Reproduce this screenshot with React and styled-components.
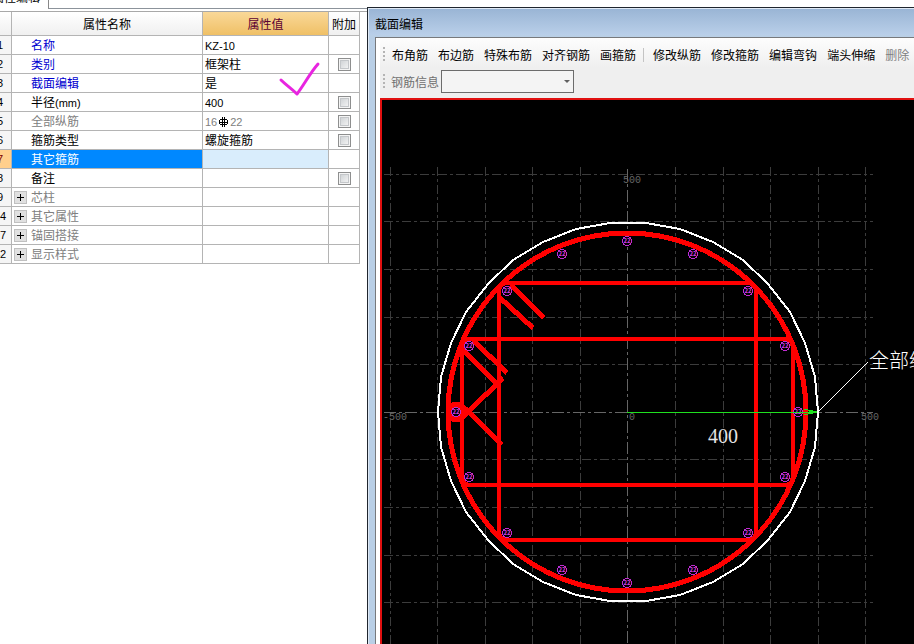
import React from 'react'
import styled, { createGlobalStyle, css } from 'styled-components'

const properties = [
    { no: '1', name: '名称', tone: 'key', value: <Latin>KZ-10</Latin> },
    { no: '2', name: '类别', tone: 'key', value: '框架柱', extra: true },
    { no: '3', name: '截面编辑', tone: 'key', value: '是' },
    { no: '4', name: <>半径<Latin>(mm)</Latin></>, label: '半径', value: <Latin>400</Latin>, extra: true },
    { no: '5', name: '全部纵筋', tone: 'muted', value: <Latin>16<SteelGrade />22</Latin>, extra: true },
    { no: '6', name: '箍筋类型', value: '螺旋箍筋', extra: true },
    { no: '7', name: '其它箍筋', selected: true },
    { no: '8', name: '备注', extra: true },
    { no: '9', name: '芯柱', tone: 'muted', group: true },
    { no: '14', name: '其它属性', tone: 'muted', group: true },
    { no: '27', name: '锚固搭接', tone: 'muted', group: true },
    { no: '42', name: '显示样式', tone: 'muted', group: true },
]

const layoutTools = ['布角筋', '布边筋', '特殊布筋', '对齐钢筋', '画箍筋']
const editTools = ['修改纵筋', '修改箍筋', '编辑弯钩', '端头伸缩']

const gridX = [-237, -190, -142, -95, -47, 48, 96, 143, 191, 238]
const gridY = [-238, -191, -143, -95, -48, 47, 95, 143, 190, 238]

const bars = [
    [0, -171], [-65, -158], [66, -158], [-120, -121], [121, -121],
    [-158, -66], [158, -66], [-171, 0], [171, 0], [-158, 65], [158, 65],
    [-120, 121], [121, 121], [-65, 158], [66, 158], [0, 171],
]

// the column edge is drawn as a 34 sided polygon
const outline = Array.from({ length: 34 }, (_, i) => {
    const a = (i * 2 * Math.PI) / 34
    return `${Math.round(190 * Math.cos(a)) + 1},${Math.round(190 * Math.sin(a))}`
}).join(' ')

function Latin({ children }) {
    return <LatinText>{children}</LatinText>
}

function SteelGrade() {
    return (
        <GradeIcon width="13" height="10" viewBox="0 0 13 10" aria-hidden="true">
            <rect x="2.5" y="2.5" width="8" height="5" rx="2" />
            <path d="M5.5 0V10M7.5 0V10M2 5.5H11" />
        </GradeIcon>
    )
}

function PropertyRow({ row }) {
    return (
        <tr>
            <NumberCell scope="row" $selected={row.selected}>{row.no}</NumberCell>
            <NameCell $tone={row.tone} $selected={row.selected}>
                <NameInner>
                    <ToggleSlot>
                        {row.group && <Toggle type="button" aria-label={`展开${row.name}`} />}
                    </ToggleSlot>
                    <span>{row.name}</span>
                </NameInner>
            </NameCell>
            <ValueCell $tone={row.tone} $selected={row.selected}>{row.value}</ValueCell>
            <ExtraCell>
                {row.extra && <Check type="checkbox" aria-label={`附加 ${row.label || row.name}`} />}
            </ExtraCell>
        </tr>
    )
}

function SectionDrawing() {
    return (
        <Drawing role="img" aria-label="圆形柱截面">
            <g transform="translate(245 312)" shapeRendering="crispEdges" fill="none">
                <g stroke="#3c3c3c" strokeDasharray="9 3 3 3">
                    {gridX.map(x => <path key={x} d={`M${x + 0.5} -245V245`} />)}
                    {gridY.map(y => <path key={y} d={`M-243 ${y + 0.5}H246`} />)}
                </g>
                <path d="M0.5 -243V245M-243 0.5H246" stroke="#666" strokeDasharray="12 3 3 3" />

                <g fill="#666" fontSize="10" fontFamily='"Liberation Mono", monospace'>
                    <text x="-4" y="-229">500</text>
                    <text x="-244" y="8">-500</text>
                    <text x="234" y="8">500</text>
                    <text x="2" y="8">0</text>
                </g>

                <polygon points={outline} stroke="#fff" strokeWidth="2" />

                <g stroke="#f00" strokeWidth="4">
                    <circle cx="0" cy="0" r="179" strokeWidth="5" />
                    <rect x="-128" y="-129" width="257" height="257" rx="8" />
                    <rect x="-165" y="-73" width="331" height="146" rx="8" />
                    <circle cx="-171" cy="0" r="7" strokeWidth="7" />
                    <g strokeWidth="5">
                        <path d="M-116 -127L-83 -94M-128 -115L-94 -84" />
                        <path d="M-154 -72L-120 -39M-164 -62L-131 -29" />
                        <path d="M-124 -34L-160 1M-161 -3L-125 33" />
                    </g>
                </g>
                <path d="M-165 -9L-156 0L-165 9Z" fill="#f00" />

                {bars.map(([x, y]) => (
                    <g key={`${x}/${y}`}>
                        <circle cx={x} cy={y} r="4.5" fill="#000" stroke="#c02bd0" />
                        <text x={x} y={y + 2} fill="#d83be6" fontSize="6" fontWeight="700" textAnchor="middle">22</text>
                    </g>
                ))}

                <path d="M0 0.5H190" stroke="#1fe01f" />
                <path d="M177 -3L190 0L177 3M182 -1L190 0L182 2Z" stroke="#1fe01f" />
                <path d="M191 0L241 -50" stroke="#fff" />
                <text x="81" y="31" fill="#e4e4e4" fontSize="20" fontFamily='"Liberation Serif", serif'>400</text>
                <text x="242" y="-44" fill="#fff" fontSize="20" fontWeight="300" fontFamily='"Noto Sans CJK SC", sans-serif'>全部纵筋</text>
            </g>
        </Drawing>
    )
}

function App() {
    return (
        <Page>
            <GlobalStyle />
            <PropertyPanel>
                <TabStrip>
                    <Tab>属性编辑</Tab>
                </TabStrip>
                <Table>
                    <colgroup>
                        <Col $w={23} />
                        <Col $w={191} />
                        <Col $w={126} />
                        <Col $w={31} />
                    </colgroup>
                    <thead>
                        <tr>
                            <HeadCell></HeadCell>
                            <HeadCell>属性名称</HeadCell>
                            <HeadCell $active>属性值</HeadCell>
                            <HeadCell>附加</HeadCell>
                        </tr>
                    </thead>
                    <tbody>
                        {properties.map(row => <PropertyRow key={row.no} row={row} />)}
                    </tbody>
                </Table>
                <Mark width="44" height="40" viewBox="0 0 44 40" aria-hidden="true">
                    <path d="M4 21C9 26 14 29 20 35C27 26 33 14 41 5" />
                </Mark>
            </PropertyPanel>

            <EditorWindow>
                <TitleBar>截面编辑</TitleBar>
                <WindowBody>
                    <Toolbars>
                        <Toolbar>
                            <Grip />
                            <ToolGroup>
                                {layoutTools.map(t => <ToolButton type="button" key={t}>{t}</ToolButton>)}
                            </ToolGroup>
                            <Divider />
                            <ToolGroup>
                                {editTools.map(t => <ToolButton type="button" key={t}>{t}</ToolButton>)}
                                <ToolButton type="button" disabled>删除</ToolButton>
                            </ToolGroup>
                        </Toolbar>
                        <Toolbar>
                            <Grip />
                            <InfoLabel htmlFor="bar-info">钢筋信息</InfoLabel>
                            <SelectWrap>
                                <InfoSelect id="bar-info" defaultValue="">
                                    <option value=""></option>
                                </InfoSelect>
                            </SelectWrap>
                        </Toolbar>
                    </Toolbars>
                    <Canvas>
                        <SectionDrawing />
                    </Canvas>
                </WindowBody>
            </EditorWindow>
        </Page>
    )
}

export default App


const GlobalStyle = createGlobalStyle`
    * {
        box-sizing: border-box;
    }
    body {
        margin: 0;
        background: #fff;
        color: #000;
        font-family: "Noto Sans CJK SC", sans-serif;
        font-size: 12px;
        line-height: 18px;
    }
    button, select, input {
        font: inherit;
        margin: 0;
    }
`

const Page = styled.div`
    display: flex;
    height: 100vh;
    overflow: hidden;
`

const PropertyPanel = styled.section`
    position: relative;
    flex: 0 0 367px;
    overflow: hidden;
`

/* the panel is scrolled a little to the right, so its left edge is cut */
const TabStrip = styled.div`
    display: flex;
    height: 12px;
    margin-left: -11px;
    border-bottom: 1px solid #a8a8a8;

    &::after {
        content: "";
        flex: 1;
        height: 8px;
        border-left: 1px solid #888;
        border-bottom: 1px solid #8c939b;
    }
`

const Tab = styled.div`
    display: flex;
    align-items: flex-end;
    width: 59px;
    height: 4px;
    padding-left: 3px;
    line-height: 14px;
    white-space: nowrap;
`

const Table = styled.table`
    width: 371px;
    margin-left: -11px;
    table-layout: fixed;
    border-collapse: separate;
    border-spacing: 0;
`

const Col = styled.col`
    width: ${props => props.$w}px;
`

const cell = css`
    height: 19px;
    padding: 0;
    border-right: 1px solid #b4b4b4;
    border-bottom: 1px solid #b4b4b4;
    font-weight: 400;
    line-height: 18px;
    white-space: nowrap;
    text-align: left;
`

const tones = {
    key: '#0000d0',
    muted: '#808080',
}

const HeadCell = styled.th`
    ${cell}
    height: 24px;
    text-align: center;
    color: ${props => props.$active ? '#5a0032' : '#000'};
    background: ${props => props.$active
        ? 'linear-gradient(#fad898, #efc066)'
        : 'linear-gradient(#fff, #f0f0f0)'};
`

const NumberCell = styled.th`
    ${cell}
    text-align: center;
    font-family: "Liberation Sans", sans-serif;
    font-size: 11px;
    color: ${props => props.$selected ? '#800000' : '#000'};
    background: ${props => props.$selected ? '#ffcf8c' : '#f5f5f5'};
`

const NameCell = styled.td`
    ${cell}
    color: ${props => props.$selected ? '#fff' : tones[props.$tone] || '#000'};
    background: ${props => props.$selected ? '#0088ff' : '#fff'};
`

const NameInner = styled.div`
    display: flex;
    align-items: center;
    height: 18px;
`

const ToggleSlot = styled.span`
    display: flex;
    width: 19px;
    padding-left: 2px;
`

const Toggle = styled.button`
    width: 13px;
    height: 13px;
    padding: 0;
    border: 1px solid #c0c0c0;
    background:
        linear-gradient(#000, #000) center / 7px 1px no-repeat,
        linear-gradient(#000, #000) center / 1px 7px no-repeat,
        #e0e0e0;
`

const ValueCell = styled.td`
    ${cell}
    padding-left: 2px;
    color: ${props => props.$tone === 'muted' ? '#808080' : '#000'};
    background: ${props => props.$selected ? '#d9edfc' : '#fff'};
`

const ExtraCell = styled.td`
    ${cell}
    text-align: center;
`

const Check = styled.input`
    appearance: none;
    display: block;
    width: 13px;
    height: 13px;
    margin: 0 auto;
    border: 1px solid #8e8f8f;
    background: linear-gradient(135deg, #c8cccf, #fafafa);
    box-shadow: inset 0 0 0 1px #f4f4f4, inset 0 0 0 2px #c4c7ca;
`

const LatinText = styled.span`
    font-family: "Liberation Sans", sans-serif;
    font-size: 11px;
    line-height: 12px;
`

const GradeIcon = styled.svg`
    vertical-align: -1px;
    fill: none;
    stroke: #000;
    shape-rendering: crispEdges;
`

const Mark = styled.svg`
    position: absolute;
    left: 277px;
    top: 59px;
    fill: none;
    stroke: #e825e0;
    stroke-width: 3;
    stroke-linecap: round;
    stroke-linejoin: round;
    pointer-events: none;
`

const EditorWindow = styled.section`
    display: flex;
    flex: 1;
    flex-direction: column;
    min-width: 0;
    margin-top: 7px;
    padding-left: 7px;
    border-top: 1px solid #20262e;
    border-left: 1px solid #20262e;
    background: linear-gradient(90deg, #dfe9f5 0, #dfe9f5 1px, #b9cfe6 1px);
`

const TitleBar = styled.header`
    height: 27px;
    margin-left: -6px;
    padding: 3px 0 0 6px;
    border-top: 1px solid #dfe9f5;
    background: linear-gradient(#9ab5d5, #b9cfe9);
    line-height: 24px;
`

const WindowBody = styled.div`
    display: flex;
    flex: 1;
    flex-direction: column;
    min-height: 0;
    margin-top: 2px;
    border-top: 1px solid #77797c;
    border-left: 1px solid #77797c;
    padding-left: 4px;
    background: #fff;
`

const Toolbars = styled.div`
    padding: 3px 0;
    background: linear-gradient(#fdfdfd, #efefef 50%);
`

const Toolbar = styled.div`
    display: flex;
    align-items: center;
    height: 27px;
    padding-left: 3px;
    overflow: hidden;
`

const Grip = styled.span`
    flex: none;
    width: 2px;
    height: 15px;
    margin-right: 6px;
    background: repeating-linear-gradient(#b4b4b4 0, #b4b4b4 2px, transparent 2px, transparent 4px);
`

const ToolGroup = styled.div`
    display: flex;
    gap: 10px;
    padding-left: 1px;
`

const ToolButton = styled.button`
    padding: 0;
    border: 0;
    background: none;
    color: #000;
    white-space: nowrap;

    &:disabled {
        color: #808080;
    }
`

const Divider = styled.span`
    flex: none;
    width: 1px;
    height: 14px;
    margin: 0 8px 0 7px;
    background: #c4c4c4;
`

const InfoLabel = styled.label`
    margin-right: 2px;
    color: #707070;
    white-space: nowrap;
`

const SelectWrap = styled.div`
    position: relative;

    &::after {
        content: "";
        position: absolute;
        right: 4px;
        top: 10px;
        border: 3px solid transparent;
        border-top-color: #606060;
        border-bottom: 0;
        pointer-events: none;
    }
`

const InfoSelect = styled.select`
    appearance: none;
    display: block;
    width: 133px;
    height: 23px;
    border: 1px solid #6c6c6c;
    border-radius: 0;
    background: #f4f4f4;
`

const Canvas = styled.main`
    flex: 1;
    min-height: 0;
    overflow: hidden;
    border-top: 2px solid #e01010;
    border-left: 2px solid #e01010;
    background: #000;
`

const Drawing = styled.svg`
    display: block;
    width: 100%;
    height: 100%;
`
